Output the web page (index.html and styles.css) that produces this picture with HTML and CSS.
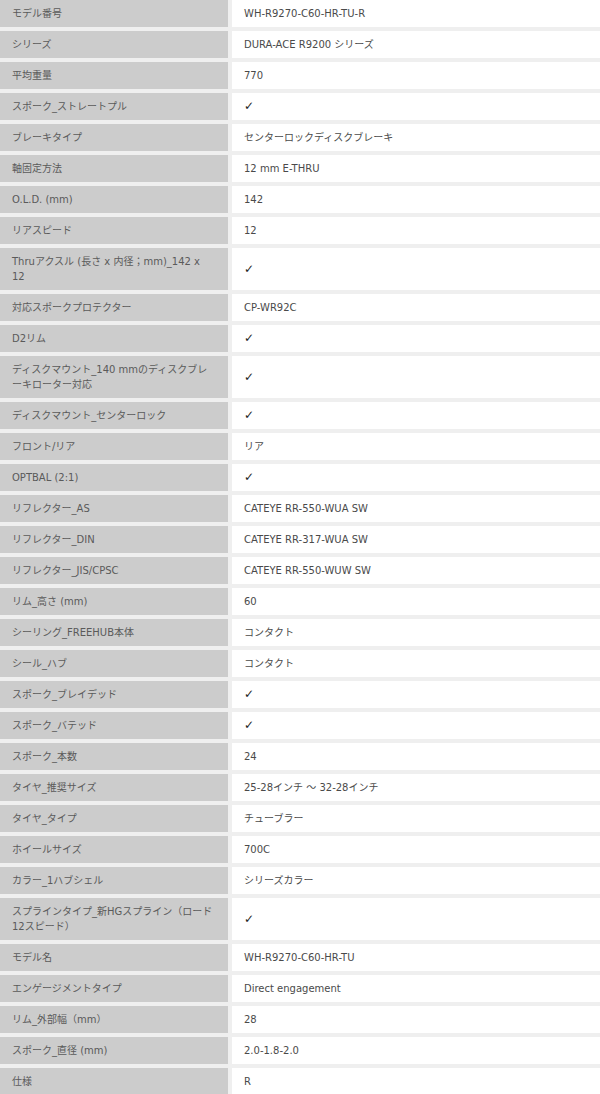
FILE: index.html
```html
<!DOCTYPE html>
<html lang="ja">
<head>
  <meta charset="UTF-8" />
  <meta name="viewport" content="width=device-width, initial-scale=1.0"/>
  <title>スペック</title>
  <link rel="stylesheet" href="styles.css">
</head>
<body>

  <table class="spec-table">
    <tbody>
      <tr><th>モデル番号</th><td>WH-R9270-C60-HR-TU-R</td></tr>
      <tr><th>シリーズ</th><td>DURA-ACE R9200 シリーズ</td></tr>
      <tr><th>平均重量</th><td>770</td></tr>
      <tr><th>スポーク_ストレートプル</th><td><span class="check">✓</span></td></tr>
      <tr><th>ブレーキタイプ</th><td>センターロックディスクブレーキ</td></tr>
      <tr><th>軸固定方法</th><td>12 mm E-THRU</td></tr>
      <tr><th>O.L.D. (mm)</th><td>142</td></tr>
      <tr><th>リアスピード</th><td>12</td></tr>
      <tr><th>Thruアクスル (長さ x 内径；mm)_142 x 12</th><td><span class="check">✓</span></td></tr>
      <tr><th>対応スポークプロテクター</th><td>CP-WR92C</td></tr>
      <tr><th>D2リム</th><td><span class="check">✓</span></td></tr>
      <tr><th>ディスクマウント_140 mmのディスクブレーキローター対応</th><td><span class="check">✓</span></td></tr>
      <tr><th>ディスクマウント_センターロック</th><td><span class="check">✓</span></td></tr>
      <tr><th>フロント/リア</th><td>リア</td></tr>
      <tr><th>OPTBAL (2:1)</th><td><span class="check">✓</span></td></tr>
      <tr><th>リフレクター_AS</th><td>CATEYE RR-550-WUA SW</td></tr>
      <tr><th>リフレクター_DIN</th><td>CATEYE RR-317-WUA SW</td></tr>
      <tr><th>リフレクター_JIS/CPSC</th><td>CATEYE RR-550-WUW SW</td></tr>
      <tr><th>リム_高さ (mm)</th><td>60</td></tr>
      <tr><th>シーリング_FREEHUB本体</th><td>コンタクト</td></tr>
      <tr><th>シール_ハブ</th><td>コンタクト</td></tr>
      <tr><th>スポーク_ブレイデッド</th><td><span class="check">✓</span></td></tr>
      <tr><th>スポーク_バテッド</th><td><span class="check">✓</span></td></tr>
      <tr><th>スポーク_本数</th><td>24</td></tr>
      <tr><th>タイヤ_推奨サイズ</th><td>25-28インチ ～ 32-28インチ</td></tr>
      <tr><th>タイヤ_タイプ</th><td>チューブラー</td></tr>
      <tr><th>ホイールサイズ</th><td>700C</td></tr>
      <tr><th>カラー_1ハブシェル</th><td>シリーズカラー</td></tr>
      <tr><th>スプラインタイプ_新HGスプライン（ロード12スピード）</th><td><span class="check">✓</span></td></tr>
      <tr><th>モデル名</th><td>WH-R9270-C60-HR-TU</td></tr>
      <tr><th>エンゲージメントタイプ</th><td>Direct engagement</td></tr>
      <tr><th>リム_外部幅（mm）</th><td>28</td></tr>
      <tr><th>スポーク_直径 (mm)</th><td>2.0-1.8-2.0</td></tr>
      <tr><th>仕様</th><td>R</td></tr>
    </tbody>
  </table>

</body>
</html>
```

FILE: styles.css
```css
* {
  box-sizing: border-box;
  margin: 0;
  padding: 0;
}

body {
  font-family: 'DejaVu Sans', 'Noto Sans CJK JP', sans-serif;
  font-size: 10px;
  background-color: #efefef;
  color: #4a4a4a;
}

.spec-table {
  width: 600px;
  border-collapse: separate;
  border-spacing: 0;
  table-layout: fixed;
}

.spec-table th,
.spec-table td {
  padding: 6px 12px;
  line-height: 15px;
  text-align: left;
  vertical-align: middle;
  font-weight: normal;
  border-bottom: 4px solid #efefef;
}

.spec-table th {
  width: 232px;
  padding-right: 14px;
  background-color: #cccccc;
  color: #5a5a5a;
  border-right: 4px solid #efefef;
}

.spec-table td {
  background-color: #fff;
}

.spec-table tr:last-child th,
.spec-table tr:last-child td {
  border-bottom: none;
}

.check {
  font-size: 12px;
  color: #222;
}
```
